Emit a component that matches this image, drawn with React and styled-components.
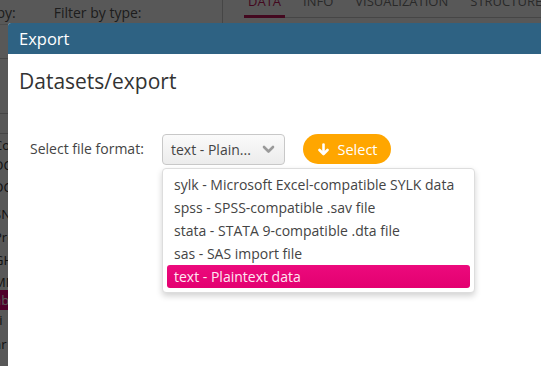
import React from "react"
import styled, { createGlobalStyle } from "styled-components"

const GlobalStyle = createGlobalStyle`
  html, body {
    margin: 0;
    padding: 0;
    overflow: hidden;
    background: #ffffff;
    font-family: "Open Sans", "Noto Sans", sans-serif;
  }
`

const Page = styled.div`
  position: fixed;
  inset: 0;
  overflow: hidden;
  background: #ffffff;
  color: #333;
  font-size: 14px;
`

const Toolbar = styled.div`
  display: flex;
  align-items: stretch;
  height: 24px;
  border-bottom: 1px solid #ddd;
`

const FilterBox = styled.div`
  display: flex;
  flex-shrink: 0;
  align-items: center;
  gap: 38px;
  width: 256px;
  margin-left: -34px;
  border-right: 1px solid #ccc;
  color: #555;
`

const Tabs = styled.div`
  display: flex;
  flex-shrink: 0;
  gap: 14px;
  margin-left: 21px;
  margin-top: -8px;
  height: 25px;
  border-bottom: 1px solid #ccc;
  padding-right: 40px;
`

const Tab = styled.div`
  padding: 0 4px;
  height: 23px;
  line-height: 18px;
  font-size: 13px;
  text-transform: uppercase;
  color: ${(p) => (p.$active ? "#c2185b" : "#777")};
  border-bottom: 3px solid ${(p) => (p.$active ? "#c2185b" : "transparent")};
`

const Sidebar = styled.div`
  width: 200px;
  margin-left: -40px;
  display: flex;
  flex-direction: column;
`

const SideSection = styled.div`
  height: ${(p) => p.$h}px;
  border-bottom: 1px solid #ccc;
  box-sizing: border-box;
`

const SideRow = styled.div`
  height: ${(p) => p.$h || 20}px;
  line-height: ${(p) => p.$h || 20}px;
  padding-left: 34px;
  background: ${(p) => (p.$active ? "#e6007a" : "transparent")};
  color: ${(p) => (p.$active ? "#fff" : "#333")};
  font-size: 13px;
  overflow: hidden;
`

const Dimmer = styled.div`
  position: absolute;
  inset: 0;
  background: rgba(0, 0, 0, 0.655);
`

const Modal = styled.div`
  position: absolute;
  left: 8px;
  top: 23px;
  right: -30px;
  bottom: -30px;
  background: #ffffff;
  border-radius: 3px 3px 0 0;
  overflow: hidden;
  display: flex;
  flex-direction: column;
`

const ModalHeader = styled.div`
  height: 31px;
  background: #2e6283;
  color: #ffffff;
  font-size: 16.5px;
  display: flex;
  align-items: center;
  padding-left: 11px;
`

const ModalBody = styled.div`
  padding: 12px 11px;
`

const Title = styled.h1`
  margin: 0;
  font-size: 21px;
  font-weight: 400;
  color: #333;
  line-height: 30px;
`

const FormRow = styled.div`
  display: flex;
  align-items: flex-start;
  margin-top: 38px;
  padding-left: 11px;
`

const Label = styled.label`
  width: 132px;
  line-height: 30px;
  color: #444;
`

const SelectWrap = styled.div`
  position: relative;
`

const SelectBox = styled.div`
  width: 123px;
  height: 31px;
  box-sizing: border-box;
  border: 1px solid #c8c8c8;
  border-radius: 4px;
  background: linear-gradient(#fafafa, #ececec);
  display: flex;
  align-items: center;
  justify-content: space-between;
  padding: 0 9px 0 8px;
  color: #444;
`

const Menu = styled.ul`
  position: absolute;
  top: 34px;
  left: 0;
  width: 313px;
  margin: 0;
  padding: 4px 4px;
  box-sizing: border-box;
  list-style: none;
  background: #ffffff;
  border: 1px solid #ddd;
  border-radius: 4px;
  box-shadow: 0 3px 6px rgba(0, 0, 0, 0.18);
`

const MenuItem = styled.li`
  height: 23px;
  line-height: 23px;
  padding-left: 7px;
  border-radius: 3px;
  white-space: nowrap;
  color: ${(p) => (p.$selected ? "#ffe6f2" : "#444")};
  background: ${(p) => (p.$selected ? "linear-gradient(#ec0a7d, #e30070)" : "transparent")};
`

const SelectButton = styled.button`
  margin-left: 18px;
  height: 30px;
  width: 88px;
  border: none;
  border-radius: 15px;
  background: #ffa600;
  color: #ffffff;
  font-family: inherit;
  font-size: 14.5px;
  display: flex;
  align-items: center;
  justify-content: center;
  gap: 8px;
  padding: 0 0 0 2px;
`

const formats = [
  "sylk - Microsoft Excel-compatible SYLK data",
  "spss - SPSS-compatible .sav file",
  "stata - STATA 9-compatible .dta file",
  "sas - SAS import file",
  "text - Plaintext data",
]

const Chevron = () => (
  <svg width="13" height="9" viewBox="0 0 13 9">
    <polyline points="2,2 6.5,6.5 11,2" fill="none" stroke="#9a9a9a" strokeWidth="2.6" strokeLinecap="round" strokeLinejoin="round" />
  </svg>
)

const ArrowDown = () => (
  <svg width="11" height="13" viewBox="0 0 11 13">
    <line x1="5.5" y1="1.5" x2="5.5" y2="10" stroke="#fff" strokeWidth="2.6" strokeLinecap="round" />
    <polyline points="1.5,7 5.5,11 9.5,7" fill="none" stroke="#fff" strokeWidth="2.6" strokeLinecap="round" strokeLinejoin="round" />
  </svg>
)

const App = () => {
  return (
    <>
      <GlobalStyle />
      <Page>
        <Toolbar>
          <FilterBox>
            <span>Sort by:</span>
            <span>Filter by type:</span>
          </FilterBox>
          <Tabs>
            <Tab $active>Data</Tab>
            <Tab>Info</Tab>
            <Tab>Visualization</Tab>
            <Tab>Structure</Tab>
          </Tabs>
        </Toolbar>
        <Sidebar>
          <SideSection $h={34} />
          <SideSection $h={55} />
          <SideSection $h={20} />
          <SideRow $h={22}>Code</SideRow>
          <SideRow $h={18}>DCA</SideRow>
          <SideRow $h={26}>DCA</SideRow>
          <SideRow $h={28}>SNI</SideRow>
          <SideRow $h={18}>Pro</SideRow>
          <SideRow $h={28}>GHI</SideRow>
          <SideRow $h={16}>MN</SideRow>
          <SideRow $h={20} $active>ab</SideRow>
          <SideRow $h={20}>ri</SideRow>
          <SideRow $h={28}>ar</SideRow>
        </Sidebar>
        <Dimmer />
        <Modal>
          <ModalHeader>Export</ModalHeader>
          <ModalBody>
            <Title>Datasets/export</Title>
            <FormRow>
              <Label>Select file format:</Label>
              <SelectWrap>
                <SelectBox>
                  <span>text - Plain...</span>
                  <Chevron />
                </SelectBox>
                <Menu>
                  {formats.map((f, i) => (
                    <MenuItem key={f} $selected={i === formats.length - 1}>
                      {f}
                    </MenuItem>
                  ))}
                </Menu>
              </SelectWrap>
              <SelectButton>
                <ArrowDown />
                Select
              </SelectButton>
            </FormRow>
          </ModalBody>
        </Modal>
      </Page>
    </>
  )
}

export default App
